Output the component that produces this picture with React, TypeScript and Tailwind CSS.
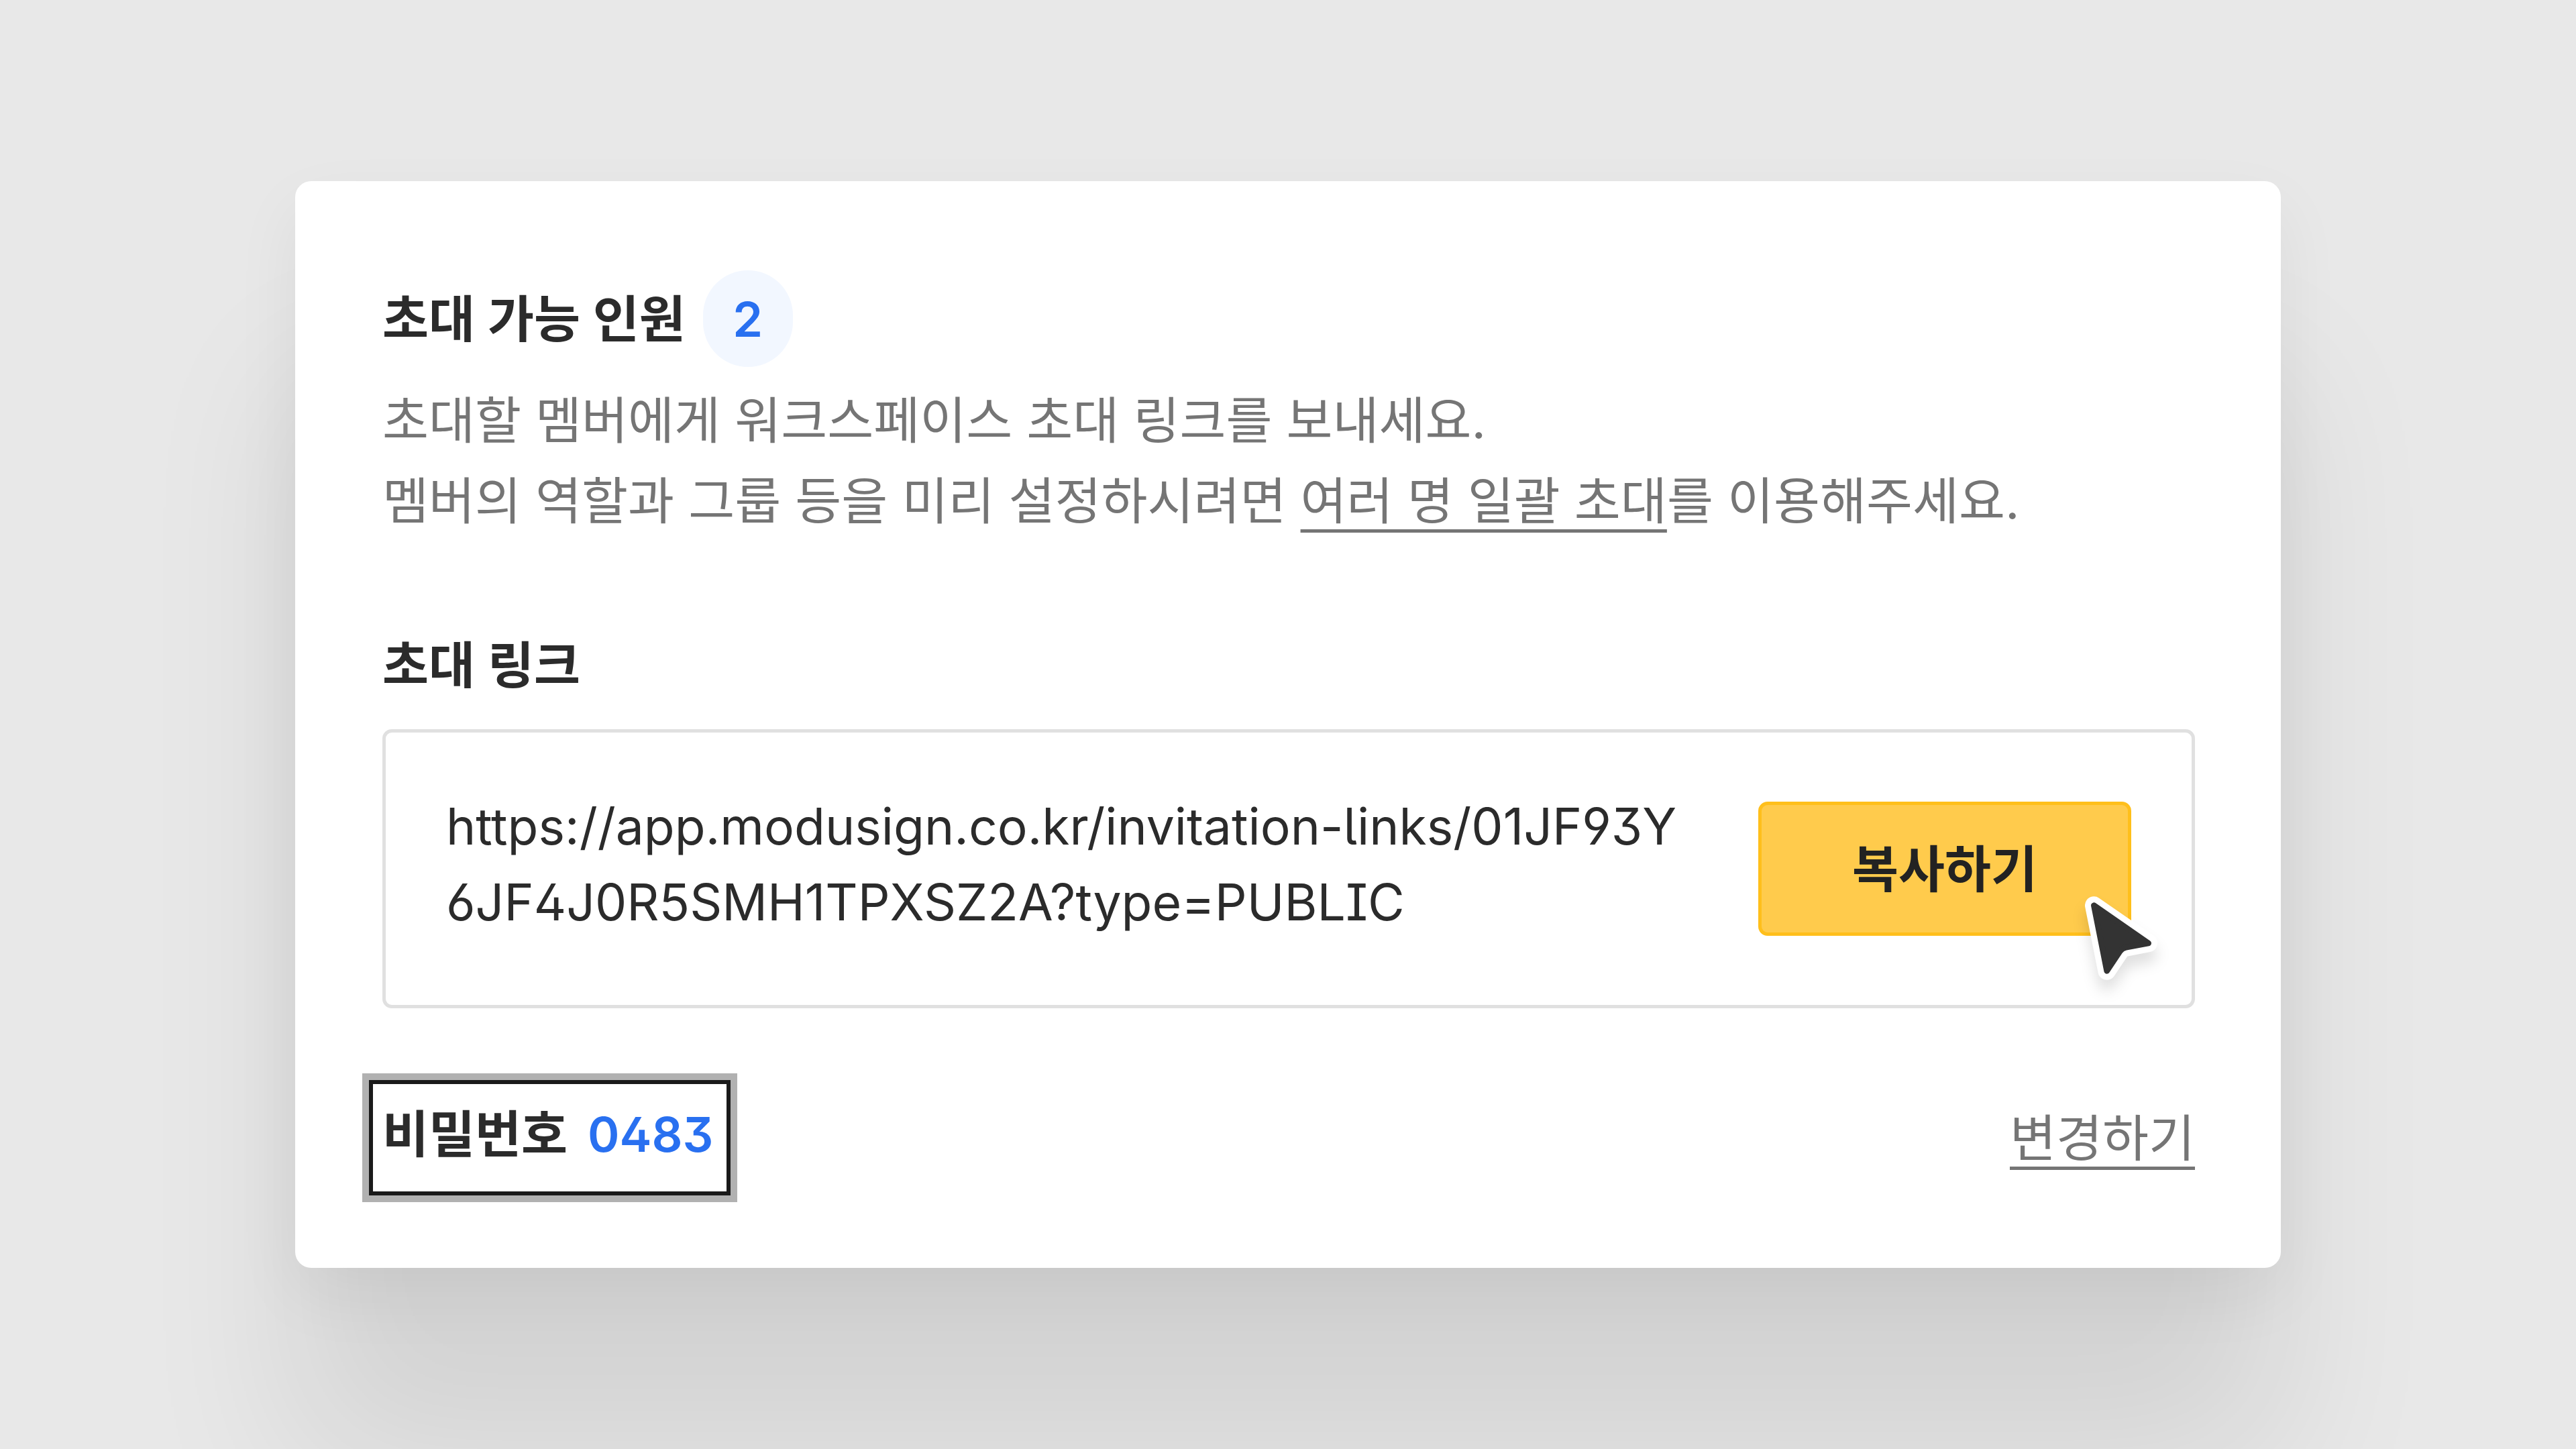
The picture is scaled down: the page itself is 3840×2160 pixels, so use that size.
import React from 'react';

const INVITE_URL =
  'https://app.modusign.co.kr/invitation-links/01JF93Y6JF4J0R5SMH1TPXSZ2A?type=PUBLIC';
const PASSWORD = '0483';
const SEATS_LEFT = 2;

// Mouse pointer resting on the copy button
const Pointer: React.FC = () => (
  <svg
    viewBox="0 0 600 600"
    className="absolute -right-[84px] -bottom-[105px] w-[200px] h-[200px] pointer-events-none overflow-visible drop-shadow-[0_16px_10px_rgba(0,0,0,0.12)]"
    strokeLinejoin="round"
    aria-hidden="true"
  >
    <path
      d="M181 149 L425 318 L325 337 Q307 340 297 355 L239 442 Z"
      fill="#ffffff"
      stroke="#ffffff"
      strokeWidth="80"
    />
    <path
      d="M181 149 L425 318 L325 337 Q307 340 297 355 L239 442 Z"
      fill="#333333"
      stroke="#333333"
      strokeWidth="26"
    />
  </svg>
);

const InviteSummary: React.FC = () => (
  <section>
    <div className="flex items-center gap-[26px]">
      <h2 className="font-semibold">초대 가능 인원</h2>
      <span className="flex items-center justify-center w-[134px] h-[144px] rounded-full bg-[#f2f7ff] text-[72px] font-semibold text-[#2970f0]">
        {SEATS_LEFT}
      </span>
    </div>
    <p className="mt-[20px] leading-[120px] text-[#757575]">
      초대할 멤버에게 워크스페이스 초대 링크를 보내세요.
      <br />
      멤버의 역할과 그룹 등을 미리 설정하시려면{' '}
      <a href="#bulk" className="underline decoration-[5px] underline-offset-[15px] [text-decoration-skip-ink:none]">
        여러 명 일괄 초대
      </a>
      를 이용해주세요.
    </p>
  </section>
);

const InviteLink: React.FC = () => (
  <section className="mt-[128px]">
    <h2 className="font-semibold">초대 링크</h2>
    <div className="mt-[39px] flex items-center justify-between gap-[90px] rounded-[14px] border-[5px] border-[#e0e0e0] py-[83px] px-[90px]">
      <p className="flex-1 break-all pb-[14px]">{INVITE_URL}</p>
      <div className="relative shrink-0">
        <button
          type="button"
          className="w-[556px] h-[200px] rounded-[14px] border-[5px] border-[#ffbf1b] bg-[#ffcb4c] font-semibold text-[#222222]"
        >
          복사하기
        </button>
        <Pointer />
      </div>
    </div>
  </section>
);

const PasswordRow: React.FC = () => (
  <section className="mt-[97px] flex items-center justify-between">
    {/* Highlighted password */}
    <div className="-ml-[30px] border-[10px] border-[#b1b1b1]">
      <div className="flex items-start gap-[30px] border-[6px] border-[#1a1a1a] h-[172px] pl-[14px] pr-[20px] py-[18px] font-semibold">
        <span>비밀번호</span>
        <span className="text-[72px] text-[#2970f0]">{PASSWORD}</span>
      </div>
    </div>
    <button
      type="button"
      className="text-[#757575] underline decoration-[5px] underline-offset-[15px] [text-decoration-skip-ink:none]"
    >
      변경하기
    </button>
  </section>
);

export default function App() {
  return (
    <main
      lang="ko"
      className="min-h-screen flex items-center justify-center overflow-hidden bg-[#e8e8e8] text-[75px] leading-[113px] text-[#2b2b2b] font-['Inter','Noto_Sans_CJK_KR',sans-serif] [font-feature-settings:'cv02','cv03','cv04','cv05','cv08','cv09']"
    >
      <div className="w-full max-w-[2960px] rounded-[24px] bg-white pl-[130px] pr-[128px] pt-[133px] pb-[98px] shadow-[0_40px_100px_rgba(0,0,0,0.06),0_290px_240px_rgba(0,0,0,0.09)]">
        <InviteSummary />
        <InviteLink />
        <PasswordRow />
      </div>
    </main>
  );
}
